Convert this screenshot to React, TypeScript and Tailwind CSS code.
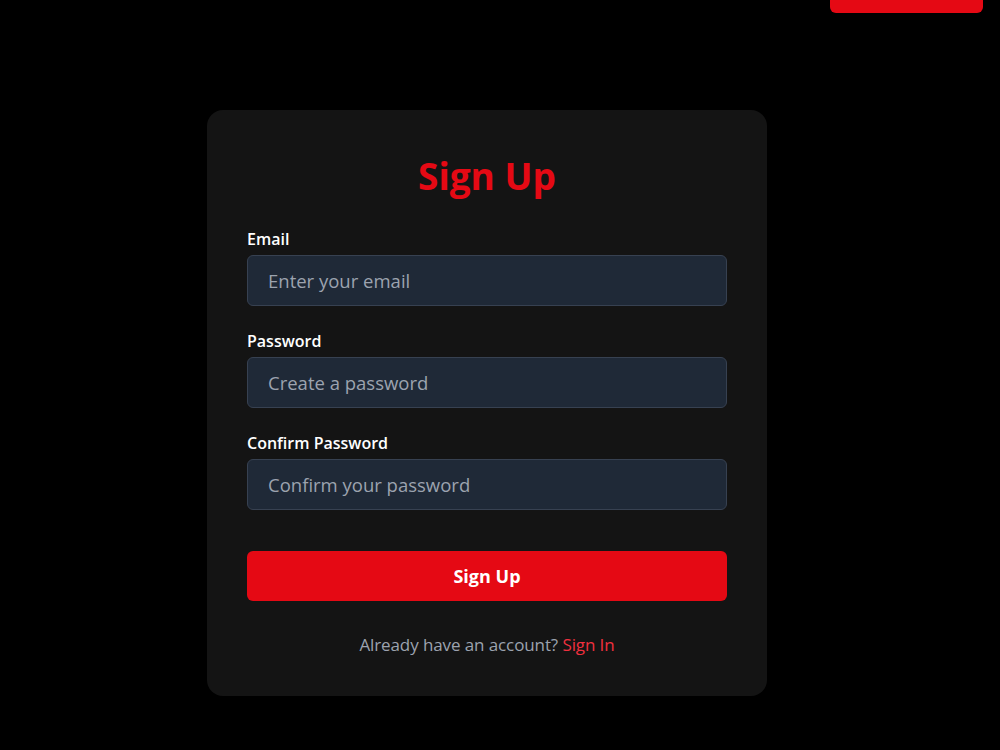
import React, { useState } from 'react';

const SignUp: React.FC = () => {
  const [email, setEmail] = useState('');
  const [pass, setPass] = useState('');
  const [confirm, setConfirm] = useState('');

  const fields = [
    { id: 'email', label: 'Email', type: 'email', placeholder: 'Enter your email', value: email, set: setEmail },
    { id: 'password', label: 'Password', type: 'password', placeholder: 'Create a password', value: pass, set: setPass },
    { id: 'confirm', label: 'Confirm Password', type: 'password', placeholder: 'Confirm your password', value: confirm, set: setConfirm },
  ];

  return (
    <div className="min-h-screen bg-black font-['Open_Sans',sans-serif]">
      {/* Header action, scrolled mostly out of view */}
      <div className="flex justify-end pr-[17px]">
        <div className="w-[153px] h-[13px] bg-[#e50914] rounded-b-md"></div>
      </div>

      <div className="flex justify-center pt-[97px] pr-[26px]">
        <div className="w-[560px] bg-[#141414] rounded-2xl px-10 pt-[44px] pb-[38px]">
          <h1 className="text-[37px] leading-[44px] font-bold text-[#e50914] text-center mb-[29px]">
            Sign Up
          </h1>

          <form className="flex flex-col" onSubmit={(e) => e.preventDefault()}>
            {fields.map((f) => (
              <div key={f.id} className="flex flex-col mb-[23px]">
                <label htmlFor={f.id} className="text-[16px] leading-[24px] font-semibold text-white mb-1">
                  {f.label}
                </label>
                <input
                  id={f.id}
                  type={f.type}
                  value={f.value}
                  onChange={(e) => f.set(e.target.value)}
                  placeholder={f.placeholder}
                  className="h-[51px] w-full px-5 bg-[#1f2937] border border-[#374151] rounded-md text-[18.5px] text-white placeholder:text-[#9ca3af] outline-none"
                />
              </div>
            ))}

            <button
              type="submit"
              className="mt-[18px] h-[50px] w-full bg-[#e50914] rounded-md text-white text-[18px] font-bold"
            >
              Sign Up
            </button>
          </form>

          <p className="mt-[31px] text-center text-[17px] leading-[26px] text-[#9ca3af] tracking-[-0.1px]">
            Already have an account? <a href="#" className="text-[#f0303f]">Sign In</a>
          </p>
        </div>
      </div>
    </div>
  );
};

export default function App() {
  return <SignUp />;
}
